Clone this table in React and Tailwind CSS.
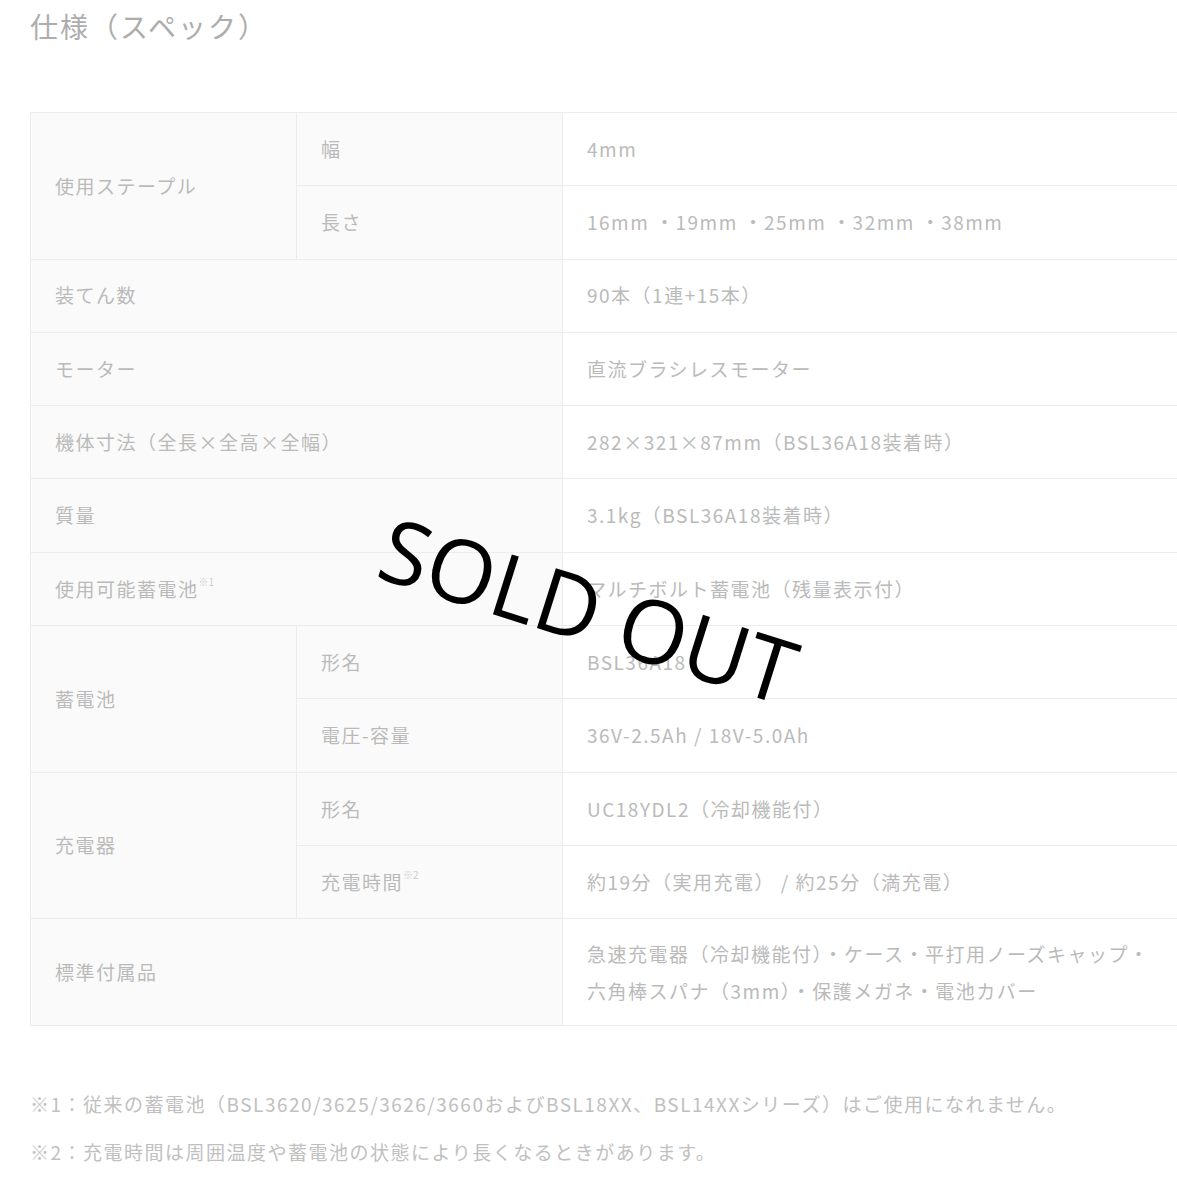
import React from 'react';

const rows = [
  { group: '使用ステープル', span: 2, label: '幅', value: '4mm' },
  { label: '長さ', value: '16mm ・19mm ・25mm ・32mm ・38mm' },
  { full: '装てん数', value: '90本（1連+15本）' },
  { full: 'モーター', value: '直流ブラシレスモーター' },
  { full: '機体寸法（全長×全高×全幅）', value: '282×321×87mm（BSL36A18装着時）' },
  { full: '質量', value: '3.1kg（BSL36A18装着時）' },
  { full: '使用可能蓄電池', note: '※1', value: 'マルチボルト蓄電池（残量表示付）' },
  { group: '蓄電池', span: 2, label: '形名', value: 'BSL36A18' },
  { label: '電圧-容量', value: '36V-2.5Ah / 18V-5.0Ah' },
  { group: '充電器', span: 2, label: '形名', value: 'UC18YDL2（冷却機能付）' },
  { label: '充電時間', note: '※2', value: '約19分（実用充電） / 約25分（満充電）' },
];

const Note = ({ children }) => (
  <sup className="text-[10px] text-[#cdcdcd] tracking-normal align-[6px]">{children}</sup>
);

export default function App() {
  const th = 'bg-[#fafafa] border border-[#ececec] px-6 text-left font-normal align-middle';
  const td = 'bg-white border border-[#ececec] px-6 text-left align-middle';

  return (
    <div
      className="relative w-[1177px] h-[1200px] overflow-hidden bg-white text-[#bababa]"
      style={{ fontFamily: '"Noto Sans CJK JP", "Noto Sans", sans-serif' }}
    >
      <div className="pl-[30px] pt-[10px]">
        {/* Title */}
        <h2 className="text-[28px] leading-[32px] tracking-[2px] text-[#adadad]">仕様（スペック）</h2>

        {/* Spec table */}
        <table className="mt-[70px] w-[1180px] border-collapse table-fixed text-[19px] tracking-[1.5px]">
          <colgroup>
            <col className="w-[266px]" />
            <col className="w-[266px]" />
            <col />
          </colgroup>
          <tbody>
            {rows.map((r, i) => (
              <tr key={i} className="h-[73.3px]">
                {r.group && (
                  <th rowSpan={r.span} className={th}>
                    {r.group}
                  </th>
                )}
                {r.full ? (
                  <th colSpan={2} className={th}>
                    {r.full}
                    {r.note && <Note>{r.note}</Note>}
                  </th>
                ) : (
                  <th className={th}>
                    {r.label}
                    {r.note && <Note>{r.note}</Note>}
                  </th>
                )}
                <td className={td}>{r.value}</td>
              </tr>
            ))}
            <tr>
              <th colSpan={2} className={th}>
                標準付属品
              </th>
              <td className={`${td} py-[16px] leading-[37px]`}>
                急速充電器（冷却機能付）・ケース・平打用ノーズキャップ・
                <br />
                六角棒スパナ（3mm）・保護メガネ・電池カバー
              </td>
            </tr>
          </tbody>
        </table>

        {/* Footnotes */}
        <div className="mt-[54px] text-[19px] tracking-[1.5px] text-[#c0c0c0]">
          <p className="leading-[48px]">
            ※1：従来の蓄電池（BSL3620/3625/3626/3660およびBSL18XX、BSL14XXシリーズ）はご使用になれません。
          </p>
          <p className="leading-[48px]">※2：充電時間は周囲温度や蓄電池の状態により長くなるときがあります。</p>
        </div>
      </div>

      {/* SOLD OUT stamp */}
      <div
        className="absolute left-[589px] top-[609px] -translate-x-1/2 -translate-y-1/2 rotate-[17.5deg] whitespace-nowrap text-[88px] leading-none text-black"
        style={{ fontFamily: '"Open Sans", sans-serif' }}
      >
        SOLD OUT
      </div>
    </div>
  );
}
